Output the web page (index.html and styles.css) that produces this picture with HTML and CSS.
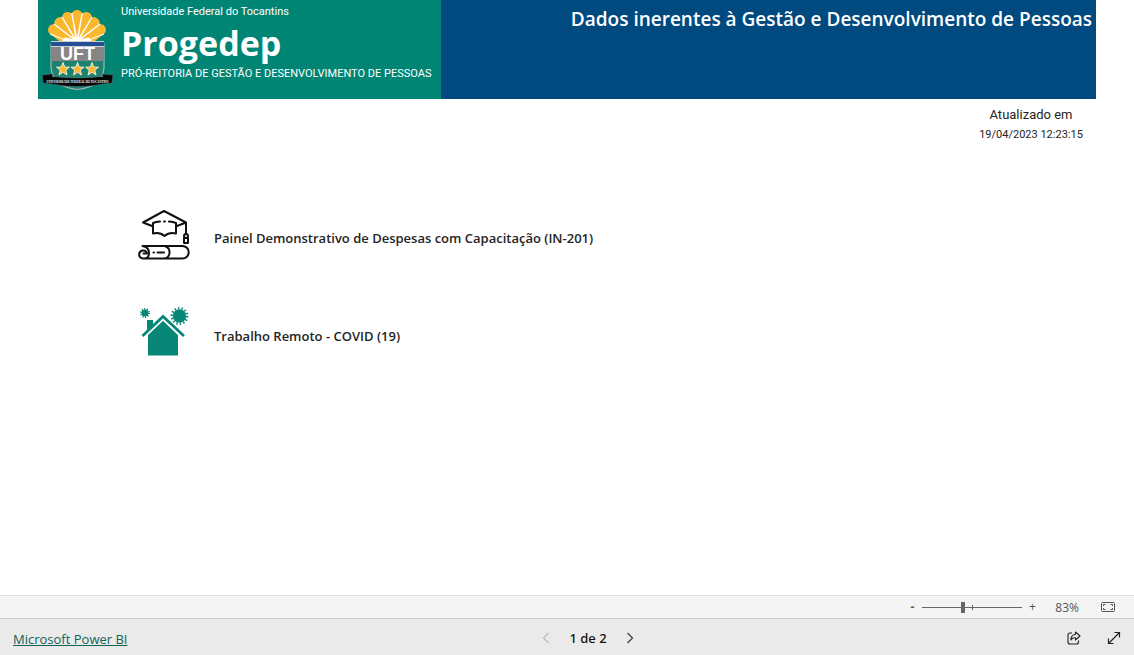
FILE: index.html
```html
<!DOCTYPE html>
<html lang="pt-BR">
<head>
<meta charset="utf-8">
<meta name="viewport" content="width=device-width, initial-scale=1">
<title>Progedep</title>
<link rel="stylesheet" href="styles.css">
</head>
<body>
<main class="report">
  <header class="banner">
    <div class="brand">
      <svg class="seal" viewBox="42 9 72 82" role="img" aria-label="UFT">
        <path d="M51 44H104V68Q102 87 77.500 89.500Q53 87 51 68Z" fill="#1d8370" stroke="#a9b5b2" stroke-width="1.200"/>
        <path d="M51 45H104V61H51Z" fill="#858585"/>
        <path d="M59 41L50 33.800A5.400 5.400 0 0 1 54.500 24.400A6 6 0 0 1 62.100 17.300A5.800 5.800 0 0 1 71.800 13.500A5.600 5.600 0 0 1 82.200 13.500A5.800 5.800 0 0 1 91.900 17.300A6 6 0 0 1 99.500 24.400A5.400 5.400 0 0 1 104 33.800L95 41Z" fill="#fbb72e"/>
        <path d="M76.500 41L54 24L76 41L62 17L76.500 41L71.800 13L77 41L82.200 13L77.500 41L92 17L78 41L100 24L77.500 41M50 34L68 41M104 34L86 41" fill="#fff" stroke="#fff" stroke-width="1.300"/>
        <path d="M65 37.500L77 40L89 37.500L93 42H61Z" fill="#fff"/>
        <path d="M51 41H104V47H51Z" fill="#c9ced6"/>
        <path d="M51 42H104V46H51Z" fill="#244f96"/>
        <text class="seal-name" x="77.500" y="60" text-anchor="middle">UFT</text>
        <g fill="#fbb72e" stroke="#fff" stroke-width=".8">
          <path id="star" d="M63 62.500L64.700 67L69.500 67.200L65.800 70.200L67 75L63 72.300L59 75L60.200 70.200L56.500 67.200L61.300 67Z"/>
          <use href="#star" x="14.500"/>
          <use href="#star" x="29"/>
        </g>
        <path d="M42.500 75L53 74L52 76.500Q77 79.500 103 76.500L102 74L113 75L112 83L103 84Q77 89 52 84L43 83Z" fill="#050505" stroke="#6f7f7c" stroke-width=".4"/>
        <text class="seal-ribbon" x="77.500" y="83" text-anchor="middle">UNIVERSIDADE FEDERAL DO TOCANTINS</text>
      </svg>
      <div class="brand-text">
        <p class="brand-line">Universidade Federal do Tocantins</p>
        <h1 class="brand-name">Progedep</h1>
        <p class="brand-line">PRÓ-REITORIA DE GESTÃO E DESENVOLVIMENTO DE PESSOAS</p>
      </div>
    </div>
    <h2 class="banner-title">Dados inerentes à Gestão e Desenvolvimento de Pessoas</h2>
  </header>

  <div class="updated">
    <p class="updated-label">Atualizado em</p>
    <p class="updated-time">19/04/2023 12:23:15</p>
  </div>

  <nav class="panels">
    <button class="panel" type="button">
      <svg class="panel-icon" viewBox="-1 0 54 54" fill="none" stroke="#111" stroke-width="2" stroke-linejoin="round" stroke-linecap="round" aria-hidden="true">
        <path d="M14 18L5 14.500L26 3L48 14.500L39 18M48 14.500V26"/>
        <path d="M15 15V25.500Q22 24 26.500 28Q31 24 38 25.500V15Q35 13.800 31 13.500M15 15Q18 13.800 22 13.500M26 13.500H27"/>
        <path d="M48 26A2 2 0 0 1 48 30A2 2 0 0 1 48 26M46 30H50V35H46Z"/>
        <path d="M4.500 38H44.500A5.500 5.500 0 0 1 44.500 50.500H4.500A4 4 0 1 1 9 45.500H5.500M4.500 38Q11 39 11 45Q11 50.500 6 50.500M27 38Q32 40 31.500 45Q31 50 26 50.500M15.500 44.500H16M19.500 44.500H26"/>
      </svg>
      <span class="panel-label">Painel Demonstrativo de Despesas com Capacitação (IN-201)</span>
    </button>
    <button class="panel" type="button">
      <svg class="panel-icon" viewBox="-1 4 54 54" fill="#088777" aria-hidden="true">
        <path d="M10 32L25 17L40 32V53.500H10Z"/>
        <path d="M5 35L25 16L45 35" fill="none" stroke="#fff" stroke-width="4"/>
        <path d="M9 28V18H15V23Z"/>
        <path d="M4.500 34L25 14.500L46 34" fill="none" stroke="#088777" stroke-width="2.800"/>
        <circle cx="41.500" cy="14" r="7" stroke="#fff" stroke-width=".5"/>
        <circle cx="41.500" cy="14" r="7.800" fill="none" stroke="#088777" stroke-width="2.400" stroke-dasharray="1.400 2.100"/>
        <circle cx="7" cy="11" r="3.500"/>
        <circle cx="7" cy="11" r="4" fill="none" stroke="#088777" stroke-width="2" stroke-dasharray="1.100 1.413"/>
      </svg>
      <span class="panel-label">Trabalho Remoto - COVID (19)</span>
    </button>
  </nav>
</main>

<div class="zoombar">
  <button class="zoom-step zoom-out" type="button" aria-label="Reduzir">-</button>
  <input class="zoom-range" type="range" min="0" max="100" value="40" aria-label="Zoom">
  <button class="zoom-step" type="button" aria-label="Ampliar">+</button>
  <span class="zoom-value">83%</span>
  <button class="icon-button" type="button" aria-label="Ajustar à página">
    <svg width="14" height="10" viewBox="0 0 14 10" fill="none" stroke="#555" aria-hidden="true">
      <rect x=".5" y=".5" width="13" height="9" rx="1"/>
      <path d="M4.500 2.500H2.500V4M9.500 2.500H11.500V4M2.500 6V7.500H4.500M11.500 6V7.500H9.500"/>
    </svg>
  </button>
</div>

<footer class="statusbar">
  <div class="status-left"><a class="product" href="#">Microsoft Power BI</a></div>
  <div class="pager">
    <button class="icon-button" type="button" aria-label="Página anterior" disabled>
      <svg width="8" height="12" viewBox="0 0 8 12" fill="none" stroke="#bdbdbd" stroke-width="1.200" aria-hidden="true"><path d="M6.500 1L1.500 6L6.500 11"/></svg>
    </button>
    <span class="page-count">1 de 2</span>
    <button class="icon-button" type="button" aria-label="Próxima página">
      <svg width="8" height="12" viewBox="0 0 8 12" fill="none" stroke="#444" stroke-width="1.300" aria-hidden="true"><path d="M1.500 1L6.500 6L1.500 11"/></svg>
    </button>
  </div>
  <div class="status-right">
    <button class="icon-button" type="button" aria-label="Compartilhar">
      <svg width="14" height="14" viewBox="0 0 14 14" fill="none" stroke="#222" stroke-width="1.100" stroke-linejoin="round" aria-hidden="true">
        <path d="M5 2H3Q1 2 1 4V11Q1 13 3 13H9.500Q11.500 13 11.500 11V9.500"/>
        <path d="M8.500 1L13 5L8.500 9V6.800Q5.500 6.500 3.800 9Q4 4 8.500 3.300Z"/>
      </svg>
    </button>
    <button class="icon-button" type="button" aria-label="Tela inteira">
      <svg width="14" height="14" viewBox="0 0 14 14" fill="none" stroke="#222" stroke-width="1.200" aria-hidden="true">
        <path d="M1.500 12.500L12.500 1.500M7.500 1.500H12.500V6.500M1.500 7.500V12.500H6.500"/>
      </svg>
    </button>
  </div>
</footer>
</body>
</html>
```
FILE: styles.css
```css
* { box-sizing: border-box; }

body {
  margin: 0;
  min-height: 100vh;
  display: flex;
  flex-direction: column;
  background: #fff;
  color: #252423;
  font-family: "Open Sans", "Noto Sans", sans-serif;
}

h1, h2, p { margin: 0; }

button {
  padding: 0;
  border: 0;
  background: none;
  color: inherit;
  font: inherit;
  cursor: pointer;
}

.report {
  flex: 1;
  padding: 0 38px;
}

.banner {
  display: flex;
  min-height: 99px;
  background: #004a80;
  color: #fff;
}

.brand {
  display: flex;
  flex: 0 0 403px;
  gap: 7px;
  padding: 4px;
  background: #008575;
}

.seal {
  flex: none;
  width: 72px;
  height: 82px;
  margin-top: 5px;
}

.seal-name {
  font: bold 18px "Liberation Sans", sans-serif;
  fill: #fff;
}

.seal-ribbon {
  font: bold 3px "Liberation Serif", serif;
  fill: #fff;
}

.brand-text { white-space: nowrap; }

.brand-line {
  font-family: Roboto, sans-serif;
  font-size: 11px;
  line-height: 16px;
}

.brand-name {
  font-size: 34px;
  line-height: 46px;
}

.banner-title {
  flex: 1;
  padding: 6px 4px;
  font-size: 19px;
  font-weight: 600;
  line-height: 26px;
  text-align: right;
}

.updated {
  width: 106px;
  margin: 6px 12px 0 auto;
  font-family: Roboto, sans-serif;
  text-align: center;
  white-space: nowrap;
}

.updated-label {
  font-size: 13px;
  line-height: 20px;
}

.updated-time {
  font-size: 11px;
  line-height: 19px;
}

.panels {
  display: flex;
  flex-direction: column;
  align-items: flex-start;
  gap: 44px;
  padding: 64px 0 0 99px;
}

.panel {
  display: flex;
  align-items: center;
  gap: 23px;
  font-size: 13px;
  font-weight: 600;
}

.panel-icon {
  width: 54px;
  height: 54px;
}

.panel-label { padding-top: 6px; }

.zoombar {
  display: flex;
  align-items: center;
  justify-content: flex-end;
  height: 23px;
  padding-right: 19px;
  border-top: 1px solid #e0e0e0;
  background: #f4f4f4;
  color: #555;
  font-size: 12px;
}

.zoom-step {
  width: 14px;
  line-height: 20px;
}

.zoom-out {
  font-weight: bold;
}

.zoom-range {
  width: 100px;
  height: 12px;
  margin: 0 3px;
  appearance: none;
  background:
    linear-gradient(#666, #666) center / 1px 5px no-repeat,
    linear-gradient(#666, #666) center / 100% 1px no-repeat;
}

.zoom-range::-webkit-slider-thumb {
  appearance: none;
  width: 4px;
  height: 11px;
  background: #666;
}

.zoom-value {
  margin: 0 22px 0 16px;
}

.icon-button {
  display: flex;
  align-items: center;
}

.statusbar {
  display: grid;
  grid-template-columns: 1fr auto 1fr;
  align-items: center;
  height: 37px;
  padding: 2px 13px 0;
  border-top: 1px solid #c8c8c8;
  background: #eaeaea;
}

.product {
  color: #0f6458;
  font-size: 13px;
  font-weight: 500;
}

.pager {
  display: flex;
  align-items: center;
  gap: 19px;
  margin-left: 42px;
}

.page-count {
  color: #111;
  font-family: "Noto Sans", sans-serif;
  font-size: 13px;
  font-weight: 500;
}

.status-right {
  display: flex;
  justify-content: flex-end;
  gap: 26px;
}
```
